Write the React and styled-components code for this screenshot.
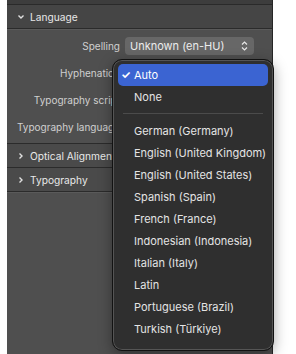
import React from 'react'
import styled, { createGlobalStyle } from 'styled-components'

const Global = createGlobalStyle`
body{
  margin:0;
  background:#fff;
  font-family:Inter, "Liberation Sans", sans-serif;
  -webkit-font-smoothing:antialiased;
}
`

const Page = styled.div`
position:relative;
width:296px;
height:354px;
overflow:hidden;
background:#fff;
`

const Panel = styled.div`
margin-left:7px;
width:265px;
height:354px;
background:#4f4f4f;
border-right:1px solid #262626;
display:flex;
flex-direction:column;
`

const TopStrip = styled.div`
height:4px;
background:#3d3d3d;
border-bottom:1px solid #2a2a2a;
`

const Header = styled.div`
height:23px;
display:flex;
align-items:center;
gap:5px;
padding-left:10px;
background:${({ open }) => open ? '#454545' : '#4a4a4a'};
border-bottom:1px solid #2b2b2b;
box-shadow:0 1px 0 #5a5a5a;
color:#e8e8e8;
font-size:10.2px;
`

const Chevron = styled.svg`
width:8px;
height:8px;
flex:none;
`

const Body = styled.div`
display:flex;
flex-direction:column;
gap:8px;
padding:7px 0 7px;
border-bottom:1px solid #2b2b2b;
box-shadow:0 1px 0 #5a5a5a;
`

const Row = styled.div`
display:grid;
grid-template-columns:113px 129px;
column-gap:5px;
align-items:center;
height:19px;
`

const Label = styled.div`
text-align:right;
white-space:nowrap;
color:#cfcfcf;
font-size:10px;
`

const Select = styled.div`
height:18px;
border-radius:4px;
background:#676767;
color:#ececec;
font-size:11px;
display:flex;
align-items:center;
justify-content:space-between;
padding:0 6px 0 5px;
`

const Menu = styled.div`
position:absolute;
left:112px;
top:59px;
width:160px;
height:282px;
padding:4px 0;
box-sizing:content-box;
background:#2f2f2f;
border:1px solid #121212;
border-radius:10px;
box-shadow:inset 0 0 0 1px #555, 0 4px 14px rgba(0,0,0,0.35);
`

const Item = styled.div`
position:relative;
height:22px;
margin:0 5px;
padding-left:16px;
border-radius:5px;
display:flex;
align-items:center;
font-size:11px;
background:${({ active }) => active ? '#3b64d2' : 'transparent'};
color:${({ active }) => active ? '#fff' : '#e4e4e4'};
`

const Check = styled.span`
position:absolute;
left:3px;
font-size:11px;
font-weight:700;
`

const Separator = styled.div`
height:1px;
margin:5px 10px 6px;
background:#4b4b4b;
`

const Down = () => (
    <Chevron viewBox="0 0 8 8"><path d="M1.5 2.5 L4 5 L6.5 2.5" fill="none" stroke="#e0e0e0" strokeWidth="1.4" /></Chevron>
)
const Right = () => (
    <Chevron viewBox="0 0 8 8"><path d="M2.5 1.5 L5 4 L2.5 6.5" fill="none" stroke="#e0e0e0" strokeWidth="1.4" /></Chevron>
)

const languages = [
    'German (Germany)',
    'English (United Kingdom)',
    'English (United States)',
    'Spanish (Spain)',
    'French (France)',
    'Indonesian (Indonesia)',
    'Italian (Italy)',
    'Latin',
    'Portuguese (Brazil)',
    'Turkish (Türkiye)',
]

export default () => {
    return (
        <Page>
            <Global />
            <Panel>
                <TopStrip />
                <Header open><Down />Language</Header>
                <Body>
                    <Row>
                        <Label>Spelling</Label>
                        <Select>
                            Unknown (en-HU)
                            <svg width="7" height="10" viewBox="0 0 7 10"><path d="M1 3.5 L3.5 1 L6 3.5 M1 6.5 L3.5 9 L6 6.5" fill="none" stroke="#e8e8e8" strokeWidth="1.2" /></svg>
                        </Select>
                    </Row>
                    <Row><Label>Hyphenation</Label></Row>
                    <Row><Label>Typography script</Label></Row>
                    <Row><Label>Typography language</Label></Row>
                </Body>
                <Header><Right />Optical Alignment</Header>
                <Header><Right />Typography</Header>
            </Panel>
            <Menu>
                <Item active><Check>✓</Check>Auto</Item>
                <Item>None</Item>
                <Separator />
                {languages.map(l => <Item key={l}>{l}</Item>)}
            </Menu>
        </Page>
    )
}
